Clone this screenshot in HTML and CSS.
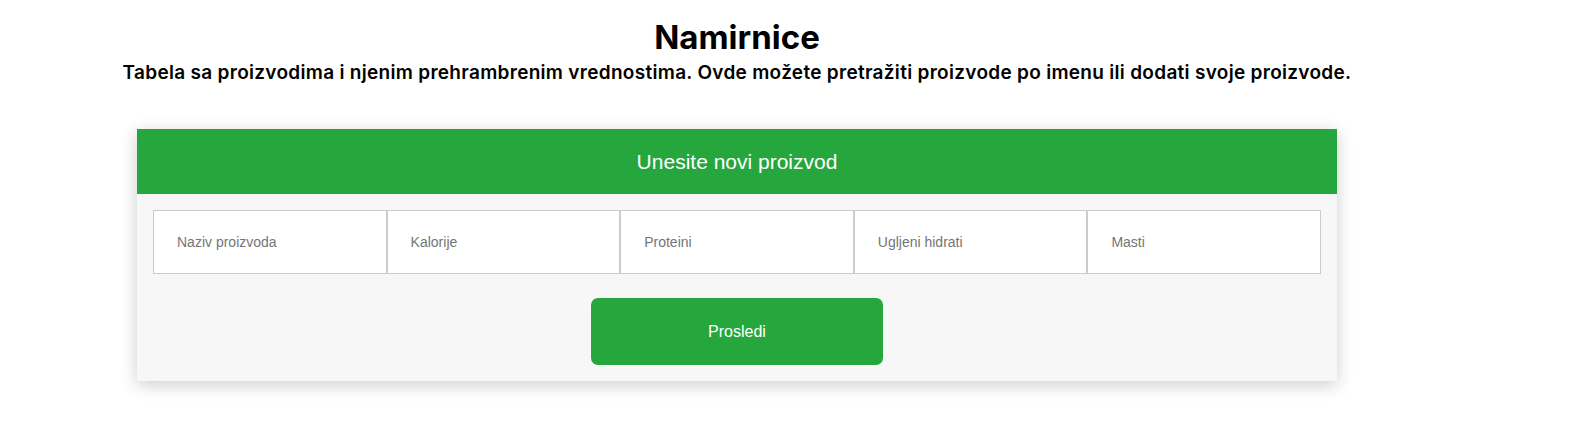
FILE: index.html
```html
<!DOCTYPE html>
<html lang="sr">
<head>
<meta charset="utf-8">
<title>Namirnice</title>
<link rel="stylesheet" href="styles.css">
</head>
<body>
<div class="page">
  <header class="intro">
    <h1 class="title">Namirnice</h1>
    <p class="subtitle">Tabela sa proizvodima i njenim prehrambrenim vrednostima. Ovde možete pretražiti proizvode po imenu ili dodati svoje proizvode.</p>
  </header>
  <form class="card">
    <div class="card-head">Unesite novi proizvod</div>
    <div class="card-body">
      <div class="fields">
        <input class="field" type="text" placeholder="Naziv proizvoda">
        <input class="field" type="text" placeholder="Kalorije">
        <input class="field" type="text" placeholder="Proteini">
        <input class="field" type="text" placeholder="Ugljeni hidrati">
        <input class="field" type="text" placeholder="Masti">
      </div>
      <button class="submit" type="button">Prosledi</button>
    </div>
  </form>
</div>
</body>
</html>
```
FILE: styles.css
```css
* { box-sizing: border-box; }
body {
  margin: 0;
  background: #fff;
  font-family: "Liberation Sans", Arial, sans-serif;
}
.page {
  width: 1474px;
  padding: 18px 0 48px;
}
.intro {
  text-align: center;
  color: #000;
  font-family: Inter, "Open Sans", sans-serif;
}
.title {
  margin: 0;
  font-size: 33px;
  font-weight: 700;
  line-height: 38px;
}
.subtitle {
  margin: 4px 0 0;
  font-size: 19px;
  font-weight: 600;
  letter-spacing: 0.3px;
  line-height: 26px;
}
.card {
  width: 1200px;
  margin: 43px auto 0;
  background: #f7f7f7;
  box-shadow: 0 4px 16px rgba(0,0,0,0.2);
}
.card-head {
  height: 65px;
  background: #26a73e;
  color: #fff;
  font-size: 21px;
  display: flex;
  align-items: center;
  justify-content: center;
}
.card-body {
  padding: 16px;
  display: flex;
  flex-direction: column;
  align-items: center;
  gap: 24px;
}
.fields {
  display: flex;
  width: 100%;
}
.field {
  flex: 1 1 0;
  min-width: 0;
  height: 64px;
  border: 1px solid #ccc;
  background: #fff;
  padding: 0 23px;
  font-family: "Liberation Sans", Arial, sans-serif;
  font-size: 14px;
  color: #333;
  outline: none;
}
.field::placeholder { color: #757575; }
.submit {
  width: 292px;
  height: 67px;
  border: none;
  border-radius: 7px;
  background: #26a73e;
  color: #fff;
  font-family: "Liberation Sans", Arial, sans-serif;
  font-size: 16px;
}
```
